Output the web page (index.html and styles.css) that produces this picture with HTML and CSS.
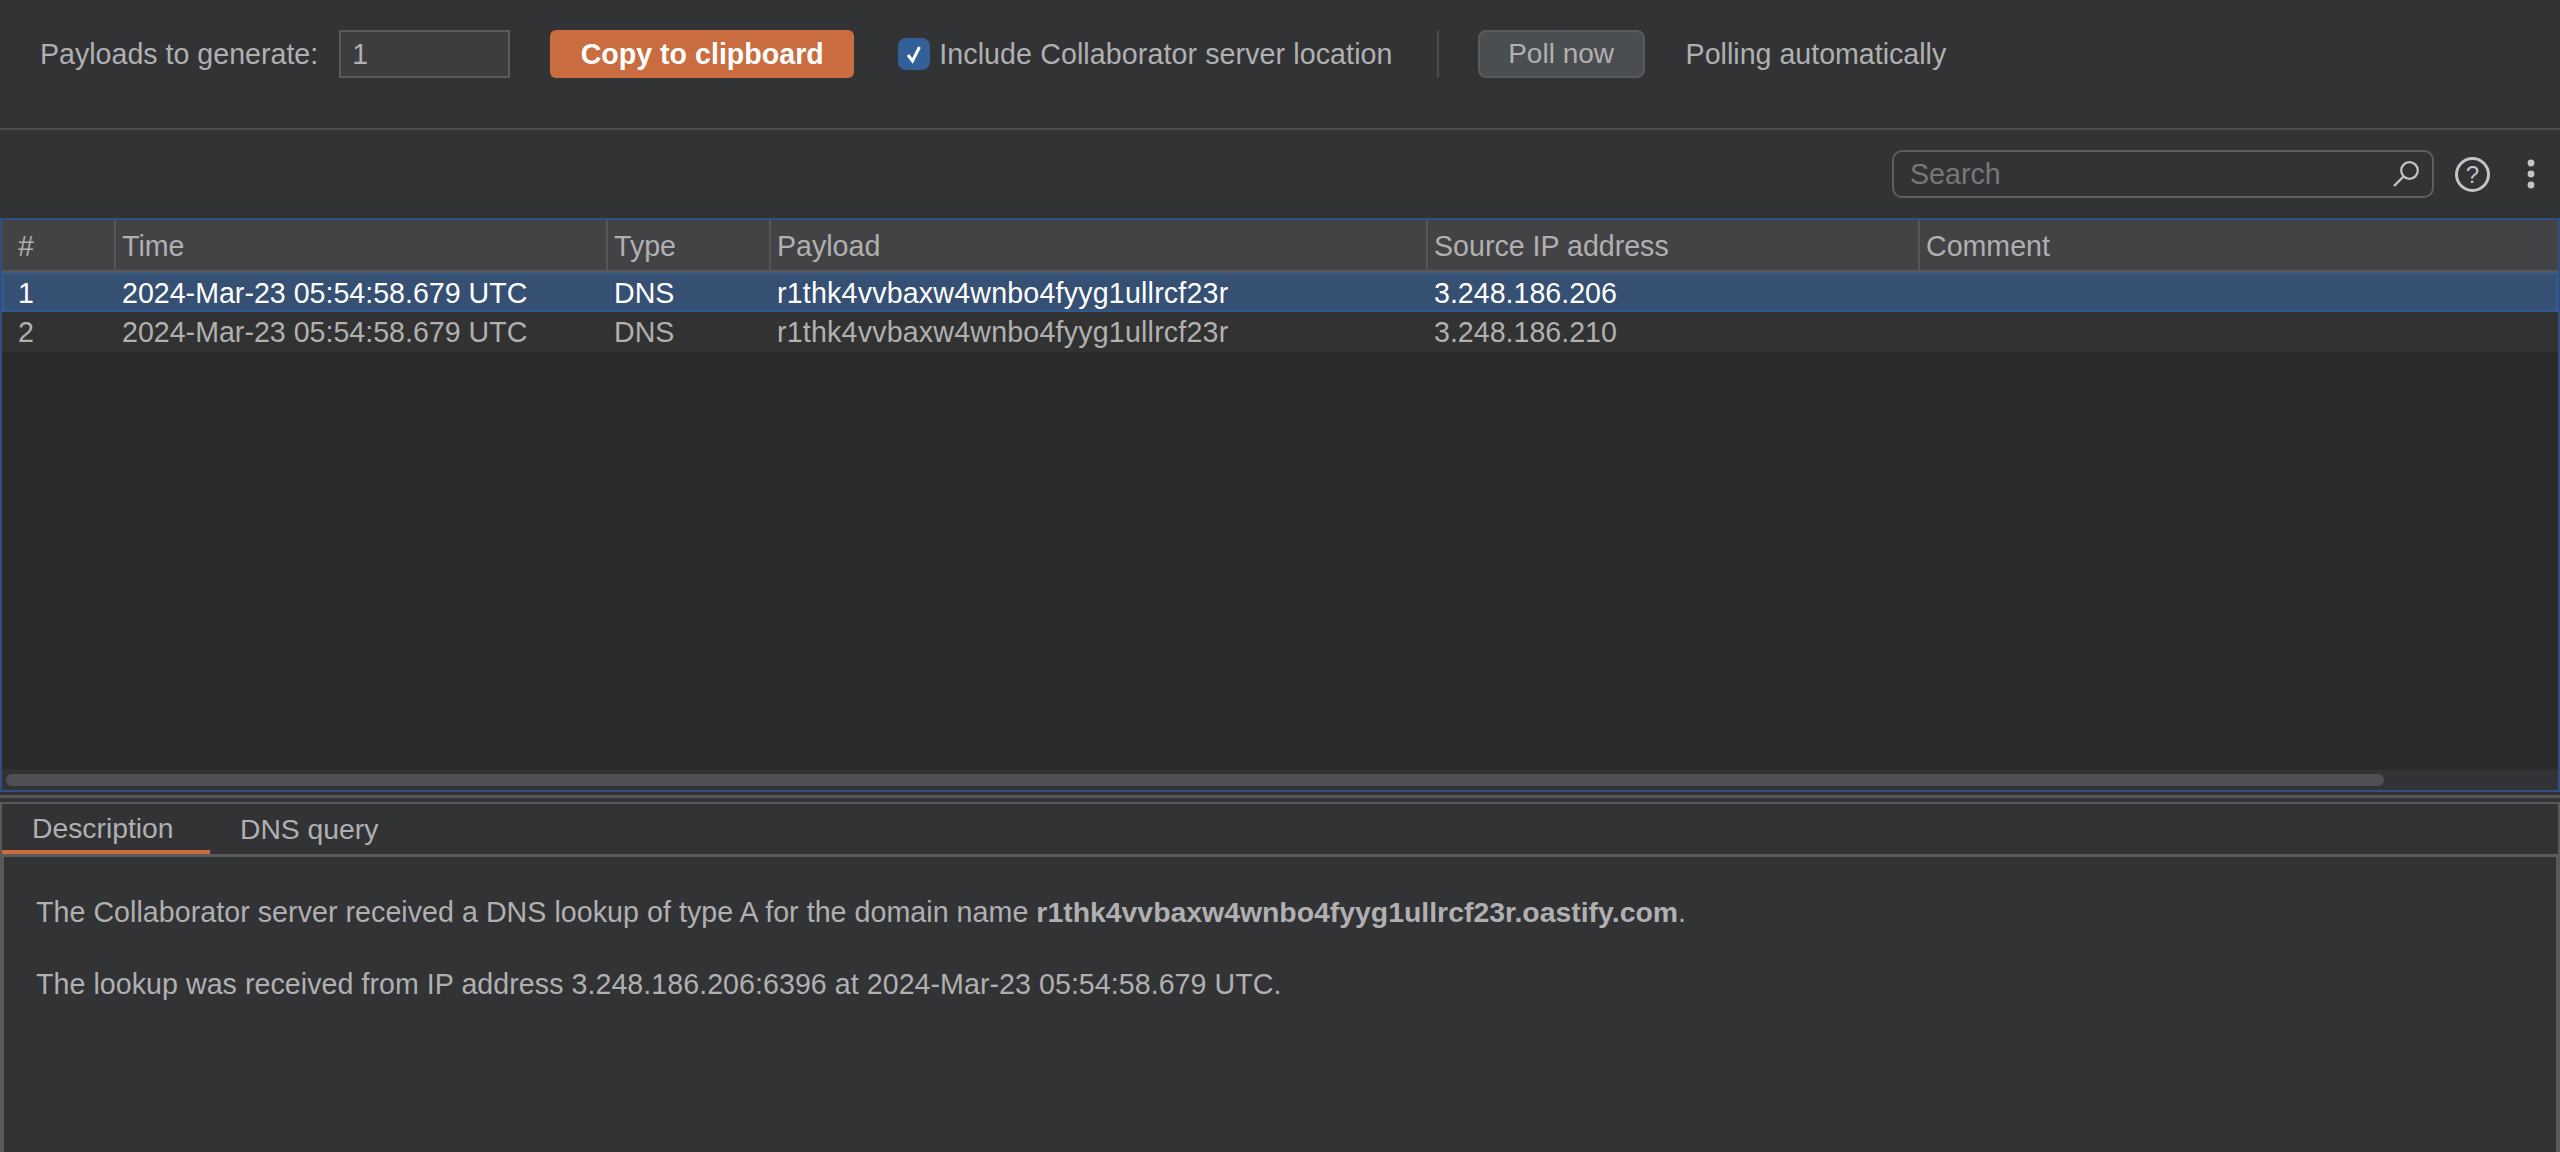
FILE: index.html
```html
<!DOCTYPE html>
<html lang="en">
<head>
  <meta charset="UTF-8">
  <title>Collaborator</title>
  <link rel="stylesheet" href="styles.css">
</head>
<body>

<div class="toolbar">
  <label class="payloads-label">Payloads to generate:</label>
  <div class="payloads-input">1</div>
  <button class="btn-copy">Copy to clipboard</button>
  <div class="check">
    <span class="check-box">
      <svg width="18" height="22" viewBox="0 0 18 22"><path d="M3 12 L7.5 18 L14.5 4" fill="none" stroke="#fff" stroke-width="3"/></svg>
    </span>
    <span class="check-label">Include Collaborator server location</span>
  </div>
  <div class="divider"></div>
  <button class="btn-poll">Poll now</button>
  <span class="polling">Polling automatically</span>
</div>

<div class="searchbar">
  <div class="search">
    <span class="search-text">Search</span>
    <svg width="26" height="26" viewBox="0 0 26 26"><circle cx="16.5" cy="9.5" r="8.3" fill="none" stroke="#c4c4c4" stroke-width="2.2"/><path d="M10.5 15.5 L1 25" fill="none" stroke="#c4c4c4" stroke-width="2.4"/></svg>
  </div>
  <span class="help">?</span>
  <svg class="dots" width="8" height="30" viewBox="0 0 8 30"><circle cx="4" cy="4" r="3.4"/><circle cx="4" cy="15" r="3.4"/><circle cx="4" cy="26" r="3.4"/></svg>
</div>

<div class="table">
  <div class="row head">
    <div>#</div><div>Time</div><div>Type</div><div>Payload</div><div>Source IP address</div><div>Comment</div>
  </div>
  <div class="row selected">
    <div>1</div><div>2024-Mar-23 05:54:58.679 UTC</div><div>DNS</div><div class="payload">r1thk4vvbaxw4wnbo4fyyg1ullrcf23r</div><div>3.248.186.206</div><div></div>
  </div>
  <div class="row second">
    <div>2</div><div>2024-Mar-23 05:54:58.679 UTC</div><div>DNS</div><div class="payload">r1thk4vvbaxw4wnbo4fyyg1ullrcf23r</div><div>3.248.186.210</div><div></div>
  </div>
  <div class="table-fill"></div>
  <div class="scroll"><div class="thumb"></div></div>
</div>

<div class="split"></div>

<div class="details">
  <div class="tabs">
    <div class="tab active">Description</div>
    <div class="tab">DNS query</div>
  </div>
  <div class="content">
    <p>The Collaborator server received a DNS lookup of type A for the domain name <b>r1thk4vvbaxw4wnbo4fyyg1ullrcf23r.oastify.com</b>.</p>
    <p>The lookup was received from IP address 3.248.186.206:6396 at 2024-Mar-23 05:54:58.679 UTC.</p>
  </div>
</div>

</body>
</html>
```

FILE: styles.css
```css
html, body { margin: 0; height: 1152px; overflow: hidden; }
body {
  display: flex;
  flex-direction: column;
  background-color: #323335;
  color: #b0b0b0;
  font-family: "Liberation Sans", Arial, sans-serif;
  font-size: 28.6px;
}

/* barra de arriba */
.toolbar {
  display: flex;
  align-items: center;
  height: 48px;
  padding: 30px 0 50px 40px;
  border-bottom: 2px solid #4e4e50;
}
.payloads-input {
  width: 156px;
  height: 44px;
  margin-left: 21px;
  padding-left: 11px;
  line-height: 44px;
  background-color: #3c3d3f;
  border: 2px solid #5a5b5d;
}
.btn-copy {
  width: 304px;
  height: 48px;
  margin-left: 40px;
  padding: 0;
  font: bold 28.6px "Liberation Sans", Arial, sans-serif;
  color: #fff;
  background-color: #c96c40;
  border: none;
  border-radius: 6px;
}
.check { display: flex; align-items: center; gap: 9px; margin-left: 44px; }
.check-box {
  display: flex;
  align-items: center;
  justify-content: center;
  width: 32px;
  height: 32px;
  background-color: #34609a;
  border-radius: 8px;
}
.check-label { letter-spacing: 0.1px; }
.divider { width: 2px; height: 48px; margin-left: 44px; background-color: #4a4b4d; }
.btn-poll {
  width: 167px;
  height: 48px;
  margin-left: 39px;
  padding: 0;
  font: 28px "Liberation Sans", Arial, sans-serif;
  color: #b0b0b0;
  background-color: #4b4e50;
  border: 2px solid #5a5b5d;
  border-radius: 8px;
}
.polling { margin-left: 41px; }

/* buscador */
.searchbar {
  display: flex;
  align-items: center;
  height: 88px;
  padding-left: 1892px;
}
.search {
  display: flex;
  align-items: center;
  justify-content: space-between;
  box-sizing: border-box;
  width: 542px;
  height: 48px;
  padding: 0 13px 0 16px;
  border: 2px solid #5f5f61;
  border-radius: 10px;
}
.search-text { color: #777; }
.help {
  display: block;
  box-sizing: border-box;
  width: 35px;
  height: 35px;
  margin-left: 21px;
  border: 3px solid #c4c4c4;
  border-radius: 50%;
  color: #c4c4c4;
  font-size: 24px;
  line-height: 29px;
  text-align: center;
}
.dots { margin-left: 37px; fill: #c4c4c4; }

/* tabla */
.table {
  display: flex;
  flex-direction: column;
  box-sizing: border-box;
  height: 574px;
  background-color: #2b2b2b;
  border: 2px solid #2f5080;
}
.row {
  display: grid;
  grid-template-columns: 113px 492px 163px 657px 492px 1fr;
  height: 40px;
  line-height: 40px;
  background-color: #323232;
}
.row > div { padding-left: 16px; }
.row > div + div { padding-left: 7px; }
.row .payload { letter-spacing: 0.2px; }
.head {
  flex: none;
  box-sizing: border-box;
  height: 53px;
  line-height: 53px;
  background-color: #434345;
  border-bottom: 3px solid #585858;
}
.head > div + div { border-left: 2px solid #565658; padding-left: 6px; margin-left: -1px; }
.selected {
  box-sizing: border-box;
  grid-template-columns: 111px 492px 163px 657px 492px 1fr;
  height: 39px;
  line-height: 36px;
  color: #fff;
  background-color: #355072;
  border: 2px solid #2f5a8f;
}
.selected > div:first-child { padding-left: 14px; }
.table-fill { flex: 1; }
.scroll { height: 20px; padding-top: 4px; box-sizing: border-box; background-color: #323335; }
.thumb { width: 2378px; height: 12px; margin-left: 4px; background-color: #4f5052; border-radius: 6px; }

.split {
  box-sizing: border-box;
  height: 10px;
  padding-top: 3px;
  background-color: #323335;
}
.split::before { content: ""; display: block; height: 3px; background-color: #565658; }

/* panel de abajo */
.details {
  flex: 1;
  display: flex;
  flex-direction: column;
  border-top: 2px solid #5a5a5c;
  border-left: 2px solid #5a5a5c;
  border-right: 2px solid #5a5a5c;
}
.tabs {
  display: flex;
  flex: none;
  height: 50px;
  font-size: 28.3px;
}
.tab { width: 208px; line-height: 50px; }
.tab:first-child { padding-left: 30px; box-sizing: border-box; }
.tab + .tab { padding-left: 30px; }
.tab.active { border-bottom: 4px solid #c96c40; box-sizing: border-box; height: 50px; line-height: 48px; }
.content {
  flex: 1;
  padding: 39px 32px;
  border-top: 3px solid #5a5a5c;
  border-left: 2px solid #5a5a5c;
  border-right: 2px solid #5a5a5c;
}
.content p { margin: 0 0 40px; line-height: 32px; letter-spacing: 0.05px; }
.content b { font-size: 28.4px; letter-spacing: 0; }
```
